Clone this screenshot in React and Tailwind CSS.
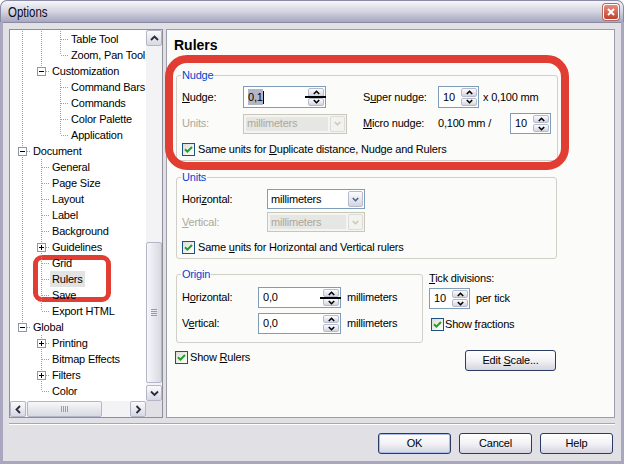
import React from 'react';

const F = "font-['Liberation_Sans',Arial,sans-serif]";

function U({ children }) {
  return <span className="underline underline-offset-[1px]">{children}</span>;
}

function Check() {
  return (
    <span className="w-[13px] h-[13px] border border-[#1c5180] bg-gradient-to-br from-[#dcdcd7] to-white flex items-center justify-center shrink-0">
      <svg width="9" height="9" viewBox="0 0 9 9" className="block">
        <path d="M1 4.2 L3.4 6.6 L8 2" stroke="#21a121" strokeWidth="2" fill="none" />
      </svg>
    </span>
  );
}

function Arrow({ dir, color = '#000' }) {
  const d = {
    up: 'M0.8 4 L3.5 1.3 L6.2 4',
    down: 'M0.8 1 L3.5 3.7 L6.2 1',
  }[dir];
  return (
    <svg width="7" height="5" viewBox="0 0 7 5" className="block">
      <path d={d} stroke={color} strokeWidth="1.6" fill="none" />
    </svg>
  );
}

function Spin() {
  return (
    <div className="w-[17px] py-[1px] pr-[1px] flex flex-col gap-[1px] shrink-0">
      <div className="flex-1 rounded-[2px] border border-[#b5bacd] bg-gradient-to-b from-[#fdfdfe] to-[#d3d5df] flex items-center justify-center">
        <Arrow dir="up" />
      </div>
      <div className="flex-1 rounded-[2px] border border-[#b5bacd] bg-gradient-to-b from-[#fdfdfe] to-[#d3d5df] flex items-center justify-center">
        <Arrow dir="down" />
      </div>
    </div>
  );
}

function SpinBox({ w, h = 'h-[21px]', children, line }) {
  return (
    <div className={`${w} ${h} border border-[#7f9db9] bg-white flex items-stretch relative shrink-0`}>
      <div className="flex-1 flex items-center pl-[4px] overflow-hidden whitespace-nowrap">{children}</div>
      <Spin />
      {line && <div className="absolute right-[-1px] w-[21px] top-1/2 -mt-[1px] h-[2px] bg-black" />}
    </div>
  );
}

function Select({ w, disabled, children }) {
  return (
    <div
      className={`${w} h-[20px] border ${
        disabled ? 'border-[#c9c7ba] bg-[#f4f4f0]' : 'border-[#7f9db9] bg-white'
      } flex items-stretch shrink-0`}
    >
      <div
        className={`flex-1 flex items-center whitespace-nowrap ${
          disabled ? 'text-[#aca899] bg-[#e6e6e4] m-[2px] pl-[1px]' : 'pl-[3px]'
        }`}
      >
        {children}
      </div>
      <div className="w-[16px] py-[1px] pr-[1px] flex shrink-0">
        <div
          className={`flex-1 rounded-[2px] border ${
            disabled ? 'border-[#dcdcd8] bg-[#f2f2ee]' : 'border-[#b5bacd] bg-gradient-to-b from-[#fdfdfe] to-[#d3d5df]'
          } flex items-center justify-center`}
        >
          <Arrow dir="down" color={disabled ? '#c9c7ba' : '#4d6185'} />
        </div>
      </div>
    </div>
  );
}

function Btn({ children, def, className = '' }) {
  return (
    <div
      className={`h-[21px] rounded-[3px] border border-[#2c3b63] bg-gradient-to-b from-white via-[#f2f2f5] to-[#d5d4e0] flex items-center justify-center shrink-0 ${
        def ? 'shadow-[inset_0_0_0_1px_#a9bcea]' : ''
      } ${className}`}
    >
      {children}
    </div>
  );
}

function SBtn({ dir }) {
  const paths = {
    up: 'M1 5 L4.5 1.5 L8 5',
    down: 'M1 1.5 L4.5 5 L8 1.5',
    left: 'M5 1 L1.5 4.5 L5 8',
    right: 'M1.5 1 L5 4.5 L1.5 8',
  };
  const horiz = dir === 'left' || dir === 'right';
  return (
    <div className="w-[16px] h-[16px] shrink-0 rounded-[2px] border border-[#b3b6c9] bg-gradient-to-b from-[#fbfbfd] to-[#d7d8e2] flex items-center justify-center">
      <svg width={horiz ? 7 : 9} height={horiz ? 9 : 7} viewBox={horiz ? '0 0 7 9' : '0 0 9 7'} className="block">
        <path d={paths[dir]} stroke="#2a2a3a" strokeWidth="1.8" fill="none" />
      </svg>
    </div>
  );
}

function Cell({ kind, box, w = 19 }) {
  const c = '#a0a0a0';
  return (
    <svg width={w} height="16" className="shrink-0 block">
      {kind === 'line' && <line x1="12.5" y1="0" x2="12.5" y2="16" stroke={c} strokeDasharray="1 1" />}
      {(kind === 'tee' || kind === 'end') && (
        <>
          <line x1="12.5" y1="0" x2="12.5" y2={kind === 'tee' ? 16 : 8} stroke={c} strokeDasharray="1 1" />
          <line x1={box ? 17 : 13} y1="8.5" x2={w} y2="8.5" stroke={c} strokeDasharray="1 1" />
        </>
      )}
      {box && (
        <>
          <rect x="8.5" y="4.5" width="8" height="8" fill="#fff" stroke="#8c9aa8" />
          <line x1="10" y1="8.5" x2="15" y2="8.5" stroke="#000" />
          {box === '+' && <line x1="12.5" y1="6" x2="12.5" y2="11" stroke="#000" />}
        </>
      )}
    </svg>
  );
}

const ROWS = [
  ['Table Tool', 3, [1, 1], 0],
  ['Zoom, Pan Tool', 3, [1, 1], 1],
  ['Customization', 2, [1], 1, '-'],
  ['Command Bars', 3, [1, 0], 0],
  ['Commands', 3, [1, 0], 0],
  ['Color Palette', 3, [1, 0], 0],
  ['Application', 3, [1, 0], 1],
  ['Document', 1, [], 0, '-'],
  ['General', 2, [1], 0],
  ['Page Size', 2, [1], 0],
  ['Layout', 2, [1], 0],
  ['Label', 2, [1], 0],
  ['Background', 2, [1], 0],
  ['Guidelines', 2, [1], 0, '+'],
  ['Grid', 2, [1], 0],
  ['Rulers', 2, [1], 0, null, true],
  ['Save', 2, [1], 0],
  ['Export HTML', 2, [1], 1],
  ['Global', 1, [], 1, '-'],
  ['Printing', 2, [0], 0, '+'],
  ['Bitmap Effects', 2, [0], 0],
  ['Filters', 2, [0], 0, '+'],
  ['Color', 2, [0], 1],
];

function Tree() {
  return (
    <div className="w-[154px] shrink-0 border border-[#8e8f9a] bg-white flex flex-col">
      <div className="flex flex-1 min-h-0">
        <div className="flex-1 min-w-0 overflow-hidden pt-[1px] relative">
          <div className="absolute left-[23px] top-[225px] w-[78px] h-[47px] border-[5px] border-[#e23d33] rounded-[9px]" />
          {ROWS.map(([t, lv, anc, last, box, sel]) => (
            <div key={t} className="flex h-[16px] items-center whitespace-nowrap relative">
              {anc.map((a, i) => (
                <Cell key={i} kind={a ? 'line' : 'empty'} />
              ))}
              <Cell kind={last ? 'end' : 'tee'} box={box} w={21} />
              <span className={`px-[2px] leading-[16px] h-[16px] ${sel ? 'bg-[#e3e3e3]' : ''}`}>{t}</span>
            </div>
          ))}
        </div>
        <div className="w-[16px] flex flex-col bg-[#f3f3f5] shrink-0">
          <SBtn dir="up" />
          <div className="flex-1">
            <div className="mt-[196px] h-[141px] rounded-[2px] border border-[#b3b6c9] bg-gradient-to-r from-[#f7f7fa] to-[#d8d9e2] flex flex-col items-center justify-center gap-[1px]">
              <div className="w-[6px] h-[1px] bg-[#9a9cae]" />
              <div className="w-[6px] h-[1px] bg-[#9a9cae]" />
              <div className="w-[6px] h-[1px] bg-[#9a9cae]" />
              <div className="w-[6px] h-[1px] bg-[#9a9cae]" />
            </div>
          </div>
          <SBtn dir="down" />
        </div>
      </div>
      <div className="flex h-[16px] shrink-0">
        <div className="flex-1 flex bg-[#f3f3f5]">
          <SBtn dir="left" />
          <div className="ml-[1px] w-[75px] rounded-[2px] border border-[#b3b6c9] bg-gradient-to-b from-[#f7f7fa] to-[#d8d9e2] flex items-center justify-center gap-[1px]">
            <div className="w-[1px] h-[6px] bg-[#9a9cae]" />
            <div className="w-[1px] h-[6px] bg-[#9a9cae]" />
            <div className="w-[1px] h-[6px] bg-[#9a9cae]" />
            <div className="w-[1px] h-[6px] bg-[#9a9cae]" />
          </div>
          <div className="flex-1" />
          <SBtn dir="right" />
        </div>
        <div className="w-[16px] bg-[#e1e0e5]" />
      </div>
    </div>
  );
}

const FS = 'border border-[#d0d0c8] rounded-[3px] px-[5px]';
const LG = 'px-[1px] -ml-[1px] text-[#0046d5] leading-[13px]';

function Panel() {
  return (
    <div className="flex-1 border border-[#9d9daa] bg-[#fbfbf9] relative pl-[9px]">
      <div className="pt-[7px] -ml-[2px] text-[14px] font-bold leading-[17px] tracking-normal">Rulers</div>

      <fieldset className={`mt-[15px] w-[382px] ${FS} pt-[4px] pb-[4px]`}>
        <legend className={LG}>Nudge</legend>
        <div className="flex items-center h-[22px]">
          <span className="w-[61px] shrink-0">
            <U>N</U>udge:
          </span>
          <SpinBox w="w-[83px]" h="h-[22px]" line>
            <span className="bg-[#b5b5c6]">0,1</span>
            <span className="w-[1px] h-[13px] bg-black" />
          </SpinBox>
          <span className="ml-[37px] w-[75px] shrink-0">
            S<U>u</U>per nudge:
          </span>
          <SpinBox w="w-[41px]" h="h-[22px]">10</SpinBox>
          <span className="ml-[4px]">x 0,100 mm</span>
        </div>
        <div className="flex items-center h-[21px] mt-[5px]">
          <span className="w-[61px] shrink-0 text-[#aca899]">Units:</span>
          <Select w="w-[104px]" disabled>
            millimeters
          </Select>
          <span className="ml-[16px] w-[75px] shrink-0">
            <U>M</U>icro nudge:
          </span>
          <span className="w-[72px] shrink-0">0,100 mm /</span>
          <SpinBox w="w-[41px]">10</SpinBox>
        </div>
        <div className="flex items-center gap-[3px] h-[14px] mt-[8px]">
          <Check />
          <span>
            Same units for <U>D</U>uplicate distance, Nudge and Rulers
          </span>
        </div>
      </fieldset>

      <fieldset className={`mt-[10px] w-[381px] ${FS} pt-[5px] pb-[4px]`}>
        <legend className={LG}>Units</legend>
        <div className="flex items-center h-[20px]">
          <span className="w-[85px] shrink-0">
            Hori<U>z</U>ontal:
          </span>
          <Select w="w-[98px]">millimeters</Select>
        </div>
        <div className="flex items-center h-[20px] mt-[3px]">
          <span className="w-[85px] shrink-0 text-[#aca899]">
            <U>V</U>ertical:
          </span>
          <Select w="w-[98px]" disabled>
            millimeters
          </Select>
        </div>
        <div className="flex items-center gap-[3px] h-[14px] mt-[8px]">
          <Check />
          <span>
            Same <U>u</U>nits for Horizontal and Vertical rulers
          </span>
        </div>
      </fieldset>

      <div className="flex mt-[9px]">
        <div className="shrink-0">
          <fieldset className={`w-[247px] ${FS} pt-[6px] pb-[8px]`}>
            <legend className={LG}>Origin</legend>
            <div className="flex items-center h-[21px]">
              <span className="w-[76px] shrink-0">
                H<U>o</U>rizontal:
              </span>
              <SpinBox w="w-[83px]" line>
                0,0
              </SpinBox>
              <span className="ml-[6px]">millimeters</span>
            </div>
            <div className="flex items-center h-[21px] mt-[5px]">
              <span className="w-[76px] shrink-0">
                V<U>e</U>rtical:
              </span>
              <SpinBox w="w-[83px]">0,0</SpinBox>
              <span className="ml-[6px]">millimeters</span>
            </div>
          </fieldset>
          <div className="flex items-center gap-[2px] h-[14px] mt-[7px] -ml-[1px]">
            <Check />
            <span>
              Show <U>R</U>ulers
            </span>
          </div>
        </div>
        <div className="ml-[6px] flex flex-col items-start">
          <div className="mt-[4px] leading-[13px]">
            <U>T</U>ick divisions:
          </div>
          <div className="flex items-center mt-[3px]">
            <SpinBox w="w-[41px]">10</SpinBox>
            <span className="ml-[6px]">per tick</span>
          </div>
          <div className="flex items-center gap-[1px] h-[14px] mt-[8px] ml-[2px]">
            <Check />
            <span>
              Show <U>f</U>ractions
            </span>
          </div>
          <Btn className="mt-[19px] ml-[36px] w-[91px]">
            <span>
              Edit <U>S</U>cale...
            </span>
          </Btn>
        </div>
      </div>

      <div className="absolute left-[-2px] top-[25px] w-[404px] h-[115px] border-[8px] border-[#e23d33] rounded-[22px]" />
    </div>
  );
}

export default function App() {
  return (
    <div className={`w-[624px] h-[464px] flex flex-col bg-[#a8a7bf] rounded-t-[7px] ${F} text-[11px] tracking-[-0.2px] text-black overflow-hidden`}>
      <div className="h-[22px] shrink-0 rounded-t-[7px] bg-gradient-to-b from-[#f6f6fa] via-[#d4d4e2] to-[#a6a6bf] flex items-center pl-[7px] pr-[4px] border border-b-0 border-[#8b8ba5]">
        <span className="text-[14px] leading-[16px] tracking-normal scale-x-[0.82] origin-left text-[#0b0b1a]">Options</span>
        <div className="ml-auto w-[16px] h-[16px] rounded-[3px] border border-white bg-gradient-to-b from-[#e88c7e] to-[#c0402e] flex items-center justify-center shadow-[0_0_0_1px_#b06a64]">
          <svg width="8" height="8" viewBox="0 0 8 8" className="block">
            <path d="M1 1 L7 7 M7 1 L1 7" stroke="#fff" strokeWidth="2" />
          </svg>
        </div>
      </div>
      <div className="flex-1 mx-[3px] mb-[3px] bg-[#e1e0e5] flex flex-col px-[6px] pt-[6px] pb-[7px] border-t border-[#8a8aa2]">
        <div className="flex gap-[3px] h-[389px] shrink-0">
          <Tree />
          <Panel />
        </div>
        <div className="mt-[5px] h-[2px] border-t border-[#a7a6b3] border-b border-b-white" />
        <div className="mt-[8px] flex justify-end gap-[8px] pr-[2px]">
          <Btn def className="w-[73px]">
            OK
          </Btn>
          <Btn className="w-[73px]">Cancel</Btn>
          <Btn className="w-[73px]">Help</Btn>
        </div>
      </div>
    </div>
  );
}
